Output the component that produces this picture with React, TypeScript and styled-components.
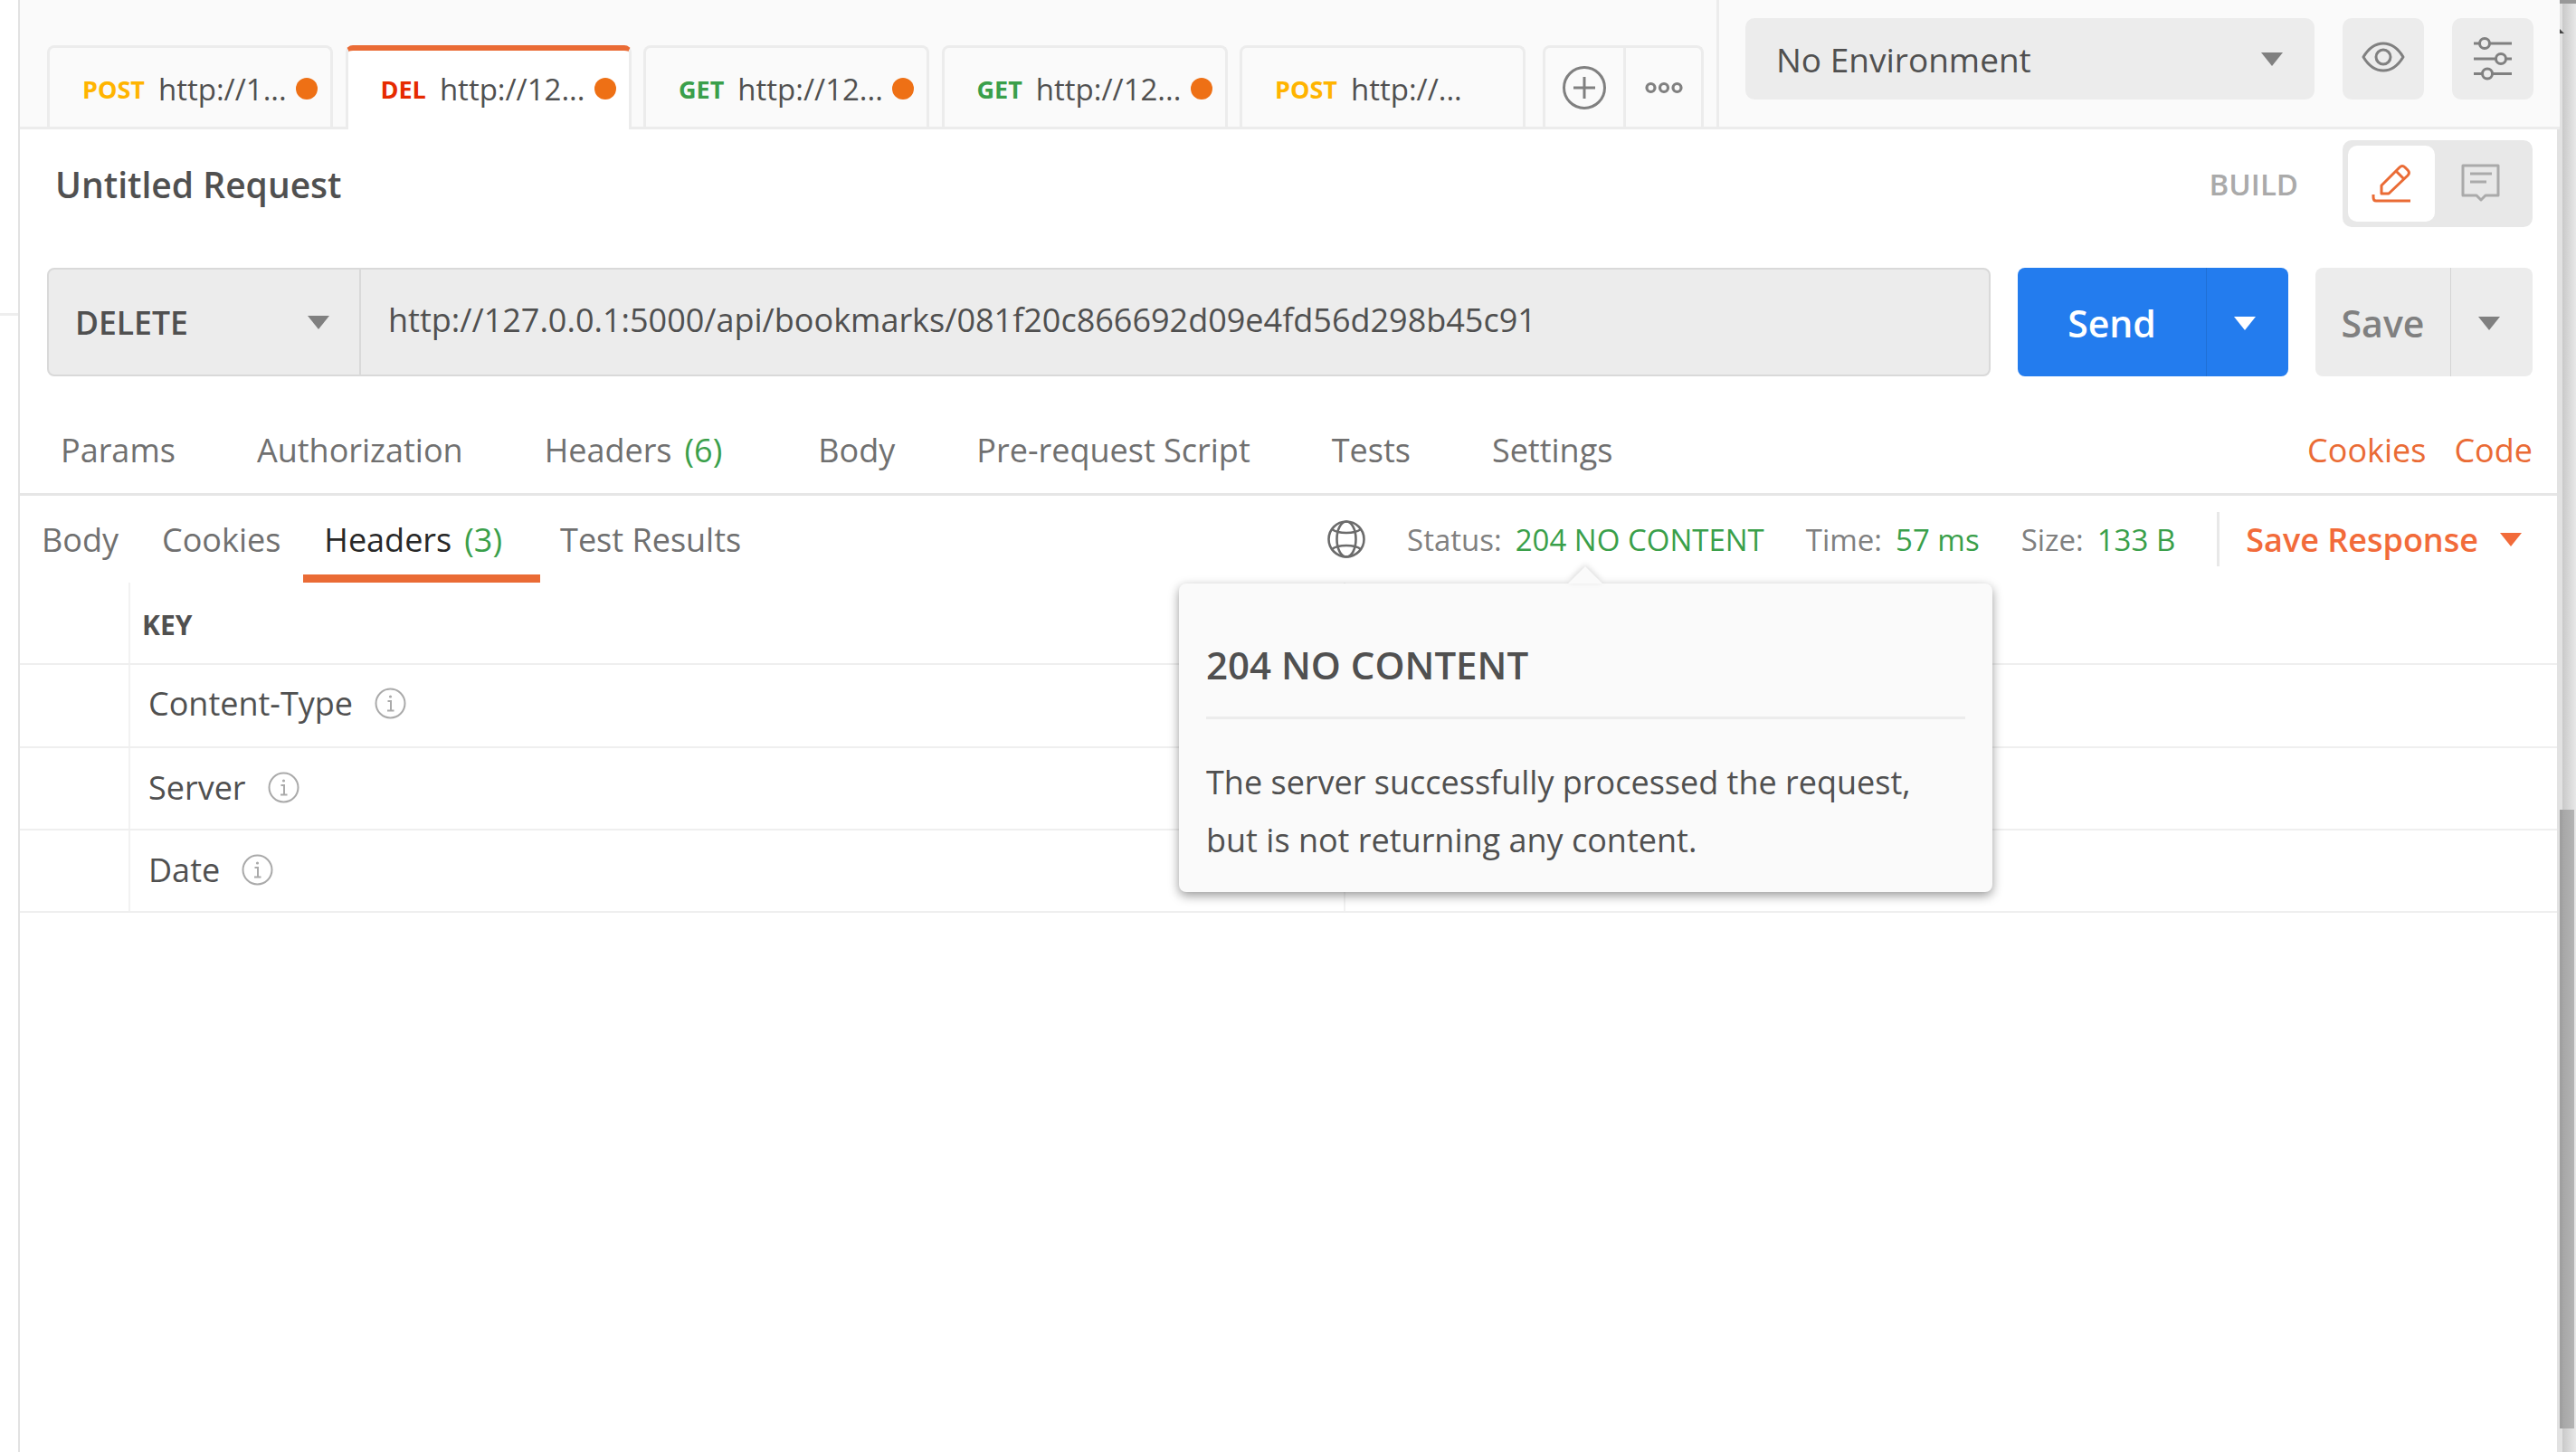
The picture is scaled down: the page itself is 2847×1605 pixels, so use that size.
import React from "react";
import styled, { createGlobalStyle } from "styled-components";

const Global = createGlobalStyle`
  html, body { margin: 0; padding: 0; background: #fff; overflow: hidden; }
  * { box-sizing: border-box; }
  #root { font-family: "Open Sans", "Noto Sans", sans-serif; }
`;

const ORANGE = "#ea6b35";
const GREEN = "#3a9f4a";

const Page = styled.div`
  width: 2847px;
  height: 1605px;
  display: grid;
  grid-template-columns: 22px 2804px 21px;
  overflow: hidden;
  background: #fff;
  color: #505050;
`;
const Gutter = styled.div`
  position: relative;
  border-right: 2px solid #e2e2e2;
  &::after {
    content: "";
    position: absolute;
    left: 0;
    right: 0;
    top: 346px;
    height: 3px;
    background: #eee;
  }
`;
const Main = styled.div`
  display: flex;
  flex-direction: column;
  min-width: 0;
`;
const TopBar = styled.div`
  display: flex;
  height: 143px;
  margin-right: -3px;
  position: relative;
  z-index: 1;
  background: #fafafa;
  border-bottom: 3px solid #ececec;
`;
const TabStrip = styled.div`
  flex: 0 0 1875px;
  display: flex;
  align-items: flex-end;
  gap: 13.5px;
  padding-left: 30px;
`;
const Tab = styled.div<{ $active?: boolean }>`
  flex: 0 0 316px;
  height: ${(p) => (p.$active ? "93px" : "90px")};
  margin-bottom: ${(p) => (p.$active ? "-3px" : "0")};
  display: flex;
  align-items: center;
  padding: ${(p) => (p.$active ? "0 14px 3px 36px" : "3px 14px 0 36px")};
  background: ${(p) => (p.$active ? "#fff" : "#fafafa")};
  border: 3px solid #ececec;
  border-bottom: 0;
  border-top: ${(p) => (p.$active ? `6px solid ${ORANGE}` : "3px solid #ececec")};
  border-radius: 8px 8px 0 0;
`;
const Method = styled.span<{ $color: string }>`
  font-size: 27px;
  font-weight: 700;
  color: ${(p) => p.$color};
  margin-right: 15px;
`;
const TabUrl = styled.span`
  font-size: 33px;
  color: #505050;
  white-space: nowrap;
`;
const Dot = styled.span`
  width: 24px;
  height: 24px;
  margin-left: auto;
  margin-top: -1px;
  border-radius: 50%;
  background: #ee7015;
`;
const AddBox = styled.div`
  flex: 0 0 178px;
  height: 90px;
  margin-left: 5.5px;
  display: flex;
  border: 3px solid #ececec;
  border-bottom: 0;
  border-radius: 8px 8px 0 0;
`;
const AddCell = styled.div<{ $split?: boolean }>`
  flex: ${(p) => (p.$split ? "0 0 89px" : "1")};
  display: flex;
  align-items: center;
  justify-content: center;
  border-right: ${(p) => (p.$split ? "3px solid #ececec" : "0")};
`;
const EnvArea = styled.div`
  flex: 1;
  display: flex;
  gap: 31px;
  padding: 20px 0 0 29px;
  border-left: 3px solid #ececec;
`;
const EnvSelect = styled.div`
  flex: 0 0 629px;
  height: 90px;
  display: flex;
  align-items: center;
  justify-content: space-between;
  padding: 0 35px 0 34px;
  background: #ececec;
  border-radius: 10px;
  font-size: 37px;
  color: #505050;
`;
const SquareBtn = styled.div`
  flex: 0 0 90px;
  height: 90px;
  display: flex;
  align-items: center;
  justify-content: center;
  background: #ececec;
  border-radius: 10px;
`;
const EyeSlot = styled.span`
  display: flex;
  margin-top: -4px;
`;
const Caret = styled.span<{ $color?: string }>`
  flex: none;
  width: 0;
  height: 0;
  border-left: 12px solid transparent;
  border-right: 12px solid transparent;
  border-top: 15px solid ${(p) => p.$color || "#808080"};
`;
const TitleRow = styled.div`
  height: 108px;
  padding: 12px 27px 0 39px;
  display: flex;
  align-items: center;
`;
const Title = styled.div`
  font-size: 39px;
  font-weight: 600;
  color: #505050;
`;
const Build = styled.div`
  margin-left: auto;
  margin-right: 49px;
  font-size: 33px;
  font-weight: 600;
  color: #aaa;
`;
const Toggle = styled.div`
  width: 210px;
  height: 96px;
  padding: 6px;
  display: flex;
  background: #e8e8e8;
  border-radius: 10px;
`;
const ToggleItem = styled.div<{ $on?: boolean }>`
  flex: ${(p) => (p.$on ? "0 0 96px" : "1")};
  display: flex;
  align-items: center;
  justify-content: center;
  background: ${(p) => (p.$on ? "#fff" : "transparent")};
  border-radius: 10px;
`;
const UrlRow = styled.div`
  height: 120px;
  margin-top: 45px;
  padding: 0 27px 0 30px;
  display: flex;
  gap: 30px;
`;
const UrlGroup = styled.div`
  flex: 1;
  display: flex;
  background: #ececec;
  border: 2px solid #d9d9d9;
  border-radius: 8px;
`;
const MethodSelect = styled.div`
  flex: 0 0 345px;
  display: flex;
  align-items: center;
  justify-content: space-between;
  padding: 0 33px 0 29px;
  border-right: 2px solid #d9d9d9;
  font-size: 35.5px;
  font-weight: 600;
  color: #505050;
`;
const UrlText = styled.div`
  display: flex;
  align-items: center;
  padding: 0 0 5px 30px;
  font-size: 36px;
  color: #505050;
  white-space: nowrap;
`;
const SplitBtn = styled.div<{ $primary?: boolean; $w: number }>`
  flex: 0 0 ${(p) => p.$w}px;
  display: flex;
  background: ${(p) => (p.$primary ? "#237cee" : "#ececec")};
  color: ${(p) => (p.$primary ? "#fff" : "#808080")};
  border-radius: 8px;
  font-size: 41px;
  font-weight: 600;
`;
const SplitLabel = styled.div`
  flex: 1;
  display: flex;
  align-items: center;
  justify-content: center;
  padding-top: 2px;
`;
const SplitCaret = styled.div`
  flex: 0 0 91px;
  display: flex;
  align-items: center;
  justify-content: center;
  border-left: 1px solid rgba(0, 0, 0, 0.1);
  padding: 2px 6px 0 0;
`;
const ParamRow = styled.div`
  height: 132px;
  padding: 34px 27px 0 45px;
  display: flex;
  align-items: center;
  gap: 90px;
  border-bottom: 3px solid #e6e6e6;
  font-size: 36px;
  color: #707070;
`;
const ParamLink = styled.span<{ $gapLeft?: number }>`
  margin-left: ${(p) => p.$gapLeft || 0}px;
  white-space: nowrap;
`;
const Count = styled.span`
  color: ${GREEN};
  margin-left: 14px;
`;
const Links = styled.div`
  margin-left: auto;
  display: flex;
  gap: 31px;
  color: ${ORANGE};
`;
const Response = styled.div`
  position: relative;
  flex: 1;
  display: flex;
  flex-direction: column;
`;
const ResponseBar = styled.div`
  height: 96px;
  padding-left: 24px;
  display: flex;
  align-items: center;
  gap: 48px;
  font-size: 36px;
  color: #707070;
`;
const ResTab = styled.div<{ $active?: boolean }>`
  position: relative;
  white-space: nowrap;
  color: ${(p) => (p.$active ? "#282828" : "inherit")};
  margin-right: ${(p) => (p.$active ? "16px" : "0")};
  &::after {
    content: "";
    display: ${(p) => (p.$active ? "block" : "none")};
    position: absolute;
    left: -23px;
    right: -42px;
    top: 63px;
    height: 9px;
    background: ${ORANGE};
  }
`;
const Meta = styled.div`
  margin-left: auto;
  padding-right: 39px;
  display: flex;
  align-items: center;
  gap: 46px;
  font-size: 33px;
  color: #808080;
`;
const MetaItem = styled.span`
  display: flex;
  gap: 15px;
  white-space: nowrap;
`;
const MetaValue = styled.span`
  color: ${GREEN};
`;
const MetaDivider = styled.span`
  width: 3px;
  height: 60px;
  background: #e8e8e8;
  margin-right: -17px;
`;
const SaveResponse = styled.span`
  display: flex;
  align-items: center;
  gap: 24px;
  font-size: 36px;
  font-weight: 600;
  color: #f26b3a;
  white-space: nowrap;
`;
const Table = styled.div`
  display: flex;
  flex-direction: column;
`;
const Row = styled.div<{ $h: number }>`
  display: grid;
  grid-template-columns: 120px 1343px 1fr;
  height: ${(p) => p.$h}px;
  border-bottom: 2px solid #efefef;
`;
const Cell = styled.div<{ $rule?: boolean; $lift?: number }>`
  display: flex;
  align-items: center;
  gap: 24px;
  padding: 0 0 ${(p) => p.$lift || 2}px 20px;
  border-left: ${(p) => (p.$rule ? "2px solid #f2f2f2" : "0")};
  font-size: 36px;
  color: #505050;
`;
const HeadCell = styled(Cell)`
  padding: 3px 0 0 13px;
  font-size: 30px;
  font-weight: 700;
`;
const Popover = styled.div`
  position: absolute;
  left: 1281px;
  top: 97px;
  width: 899px;
  height: 341px;
  padding: 0 30px;
  background: #fafafa;
  border-radius: 8px;
  box-shadow: 0 4px 12px rgba(0, 0, 0, 0.4);
  z-index: 2;
  &::before {
    content: "";
    position: absolute;
    left: 430px;
    top: -19px;
    width: 0;
    height: 0;
    border-left: 19px solid transparent;
    border-right: 19px solid transparent;
    border-bottom: 19px solid #fafafa;
    filter: drop-shadow(0 -2px 3px rgba(0, 0, 0, 0.15));
  }
`;
const PopTitle = styled.div`
  height: 150px;
  padding-top: 62px;
  border-bottom: 3px solid #ececec;
  font-size: 42px;
  line-height: 56px;
  font-weight: 600;
  color: #505050;
`;
const PopText = styled.div`
  padding-top: 38px;
  font-size: 36px;
  line-height: 64px;
  color: #505050;
`;
const ScrollTrack = styled.div`
  position: relative;
  background: linear-gradient(90deg, #e2e2e2 0 6px, #c9c9c9 6px, #e8e8e8 100%);
  &::before {
    content: "";
    position: absolute;
    left: 3px;
    right: 0;
    top: 0;
    height: 4px;
    background: #999;
  }
  &::after {
    content: "";
    position: absolute;
    left: 3px;
    top: 32px;
    border-left: 5px solid #444;
    border-top: 5px solid transparent;
  }
`;
const ScrollThumb = styled.div`
  position: absolute;
  left: 3px;
  top: 895px;
  width: 16px;
  height: 684px;
  background: linear-gradient(90deg, #a0a0a0 0 3px, #a6a6a6 3px, #b4b4b4 100%);
`;

const PlusIcon = () => (
  <svg width="50" height="50" viewBox="0 0 50 50" fill="none" stroke="#808080" strokeWidth="3">
    <circle cx="25" cy="25" r="22.5" />
    <path d="M25 13v24M13 25h24" />
  </svg>
);
const MoreIcon = () => (
  <svg width="44" height="14" viewBox="0 0 44 14" fill="none" stroke="#808080" strokeWidth="3.2">
    <circle cx="7.5" cy="7" r="4.5" />
    <circle cx="22" cy="7" r="4.5" />
    <circle cx="36.5" cy="7" r="4.5" />
  </svg>
);
const EyeIcon = () => (
  <svg width="48" height="34" viewBox="0 0 48 34" fill="none" stroke="#808080" strokeWidth="3">
    <path d="M2 17C8 7 15 2 24 2s16 5 22 15c-6 10-13 15-22 15S8 27 2 17Z" strokeLinejoin="round" />
    <circle cx="24" cy="17" r="8" />
  </svg>
);
const SlidersIcon = () => (
  <svg width="42" height="50" viewBox="0 0 42 50" fill="#808080">
    <rect x="0" y="6.5" width="42" height="3" />
    <rect x="0" y="23.5" width="42" height="3" />
    <rect x="0" y="40" width="42" height="3" />
    <circle cx="12" cy="8" r="5.5" fill="#ececec" stroke="#808080" strokeWidth="3" />
    <circle cx="30" cy="25" r="5.5" fill="#ececec" stroke="#808080" strokeWidth="3" />
    <circle cx="15" cy="41.5" r="5.5" fill="#ececec" stroke="#808080" strokeWidth="3" />
  </svg>
);
const PencilIcon = () => (
  <svg width="44" height="44" viewBox="0 0 44 44" fill="none" stroke={ORANGE} strokeWidth="3">
    <path d="M11 24 31 4c2-2 4-2 6 0l3 3c2 2 2 4 0 6L19 33h-8Z" strokeLinejoin="round" />
    <path d="m27 8 9 9" />
    <path d="M2 34v3c0 2 1 4 3 4h38" />
  </svg>
);
const CommentIcon = () => (
  <svg width="44" height="44" viewBox="0 0 44 44" fill="none" stroke="#aaa" strokeWidth="3">
    <path d="M2 2h39v33H27l-5 5-5-5H2Z" strokeLinejoin="round" />
    <path d="M10 11h24M10 20h18" />
  </svg>
);
const GlobeIcon = () => (
  <svg width="42" height="42" viewBox="0 0 42 42" fill="none" stroke="#6b6b6b" strokeWidth="2.6">
    <circle cx="21" cy="21" r="19.5" />
    <ellipse cx="21" cy="21" rx="10.5" ry="19.5" />
    <path d="M5 10c4 3 9 4 16 4s12-1 16-4M5 32c4-3 9-4 16-4s12 1 16 4" />
  </svg>
);
const InfoIcon = () => (
  <svg width="35" height="35" viewBox="0 0 35 35" fill="none" stroke="#aaa" strokeWidth="2">
    <circle cx="17.5" cy="17.5" r="16" />
    <circle cx="17.5" cy="10" r="1.6" fill="#aaa" stroke="none" />
    <path d="M14.5 15h3.5v10M14 25.5h7.5" />
  </svg>
);

const tabs = [
  { m: "POST", c: "#ffb400", u: "http://1...", dot: true },
  { m: "DEL", c: "#e62b00", u: "http://12...", dot: true, active: true },
  { m: "GET", c: GREEN, u: "http://12...", dot: true },
  { m: "GET", c: GREEN, u: "http://12...", dot: true },
  { m: "POST", c: "#ffb400", u: "http://...", dot: false },
];
const keys = [
  { k: "Content-Type", h: 92, lift: 5 },
  { k: "Server", h: 91, lift: 2 },
  { k: "Date", h: 91, lift: 2 },
];

export default function App() {
  return (
    <Page>
      <Global />
      <Gutter />
      <Main>
        <TopBar>
          <TabStrip>
            {tabs.map((t, i) => (
              <Tab key={i} $active={t.active}>
                <Method $color={t.c}>{t.m}</Method>
                <TabUrl>{t.u}</TabUrl>
                {t.dot && <Dot />}
              </Tab>
            ))}
            <AddBox>
              <AddCell $split>
                <PlusIcon />
              </AddCell>
              <AddCell>
                <MoreIcon />
              </AddCell>
            </AddBox>
          </TabStrip>
          <EnvArea>
            <EnvSelect>
              No Environment
              <Caret />
            </EnvSelect>
            <SquareBtn>
              <EyeSlot>
                <EyeIcon />
              </EyeSlot>
            </SquareBtn>
            <SquareBtn>
              <SlidersIcon />
            </SquareBtn>
          </EnvArea>
        </TopBar>
        <TitleRow>
          <Title>Untitled Request</Title>
          <Build>BUILD</Build>
          <Toggle>
            <ToggleItem $on>
              <PencilIcon />
            </ToggleItem>
            <ToggleItem>
              <CommentIcon />
            </ToggleItem>
          </Toggle>
        </TitleRow>
        <UrlRow>
          <UrlGroup>
            <MethodSelect>
              DELETE
              <Caret />
            </MethodSelect>
            <UrlText>http://127.0.0.1:5000/api/bookmarks/081f20c866692d09e4fd56d298b45c91</UrlText>
          </UrlGroup>
          <SplitBtn $primary $w={299}>
            <SplitLabel>Send</SplitLabel>
            <SplitCaret>
              <Caret $color="#fff" />
            </SplitCaret>
          </SplitBtn>
          <SplitBtn $w={240}>
            <SplitLabel>Save</SplitLabel>
            <SplitCaret>
              <Caret />
            </SplitCaret>
          </SplitBtn>
        </UrlRow>
        <ParamRow>
          <ParamLink>Params</ParamLink>
          <ParamLink>Authorization</ParamLink>
          <ParamLink>
            Headers<Count>(6)</Count>
          </ParamLink>
          <ParamLink $gapLeft={16}>Body</ParamLink>
          <ParamLink>Pre-request Script</ParamLink>
          <ParamLink>Tests</ParamLink>
          <ParamLink>Settings</ParamLink>
          <Links>
            <span>Cookies</span>
            <span>Code</span>
          </Links>
        </ParamRow>
        <Response>
          <ResponseBar>
            <ResTab>Body</ResTab>
            <ResTab>Cookies</ResTab>
            <ResTab $active>
              Headers<Count>(3)</Count>
            </ResTab>
            <ResTab>Test Results</ResTab>
            <Meta>
              <GlobeIcon />
              <MetaItem>
                Status: <MetaValue>204 NO CONTENT</MetaValue>
              </MetaItem>
              <MetaItem>
                Time: <MetaValue>57 ms</MetaValue>
              </MetaItem>
              <MetaItem>
                Size: <MetaValue>133 B</MetaValue>
              </MetaItem>
              <MetaDivider />
              <SaveResponse>
                Save Response
                <Caret $color="#f26b3a" />
              </SaveResponse>
            </Meta>
          </ResponseBar>
          <Table>
            <Row $h={91}>
              <Cell />
              <HeadCell $rule>KEY</HeadCell>
              <Cell $rule />
            </Row>
            {keys.map((r) => (
              <Row key={r.k} $h={r.h}>
                <Cell />
                <Cell $rule $lift={r.lift}>
                  {r.k}
                  <InfoIcon />
                </Cell>
                <Cell $rule />
              </Row>
            ))}
          </Table>
          <Popover>
            <PopTitle>204 NO CONTENT</PopTitle>
            <PopText>
              The server successfully processed the request,
              <br />
              but is not returning any content.
            </PopText>
          </Popover>
        </Response>
      </Main>
      <ScrollTrack>
        <ScrollThumb />
      </ScrollTrack>
    </Page>
  );
}
